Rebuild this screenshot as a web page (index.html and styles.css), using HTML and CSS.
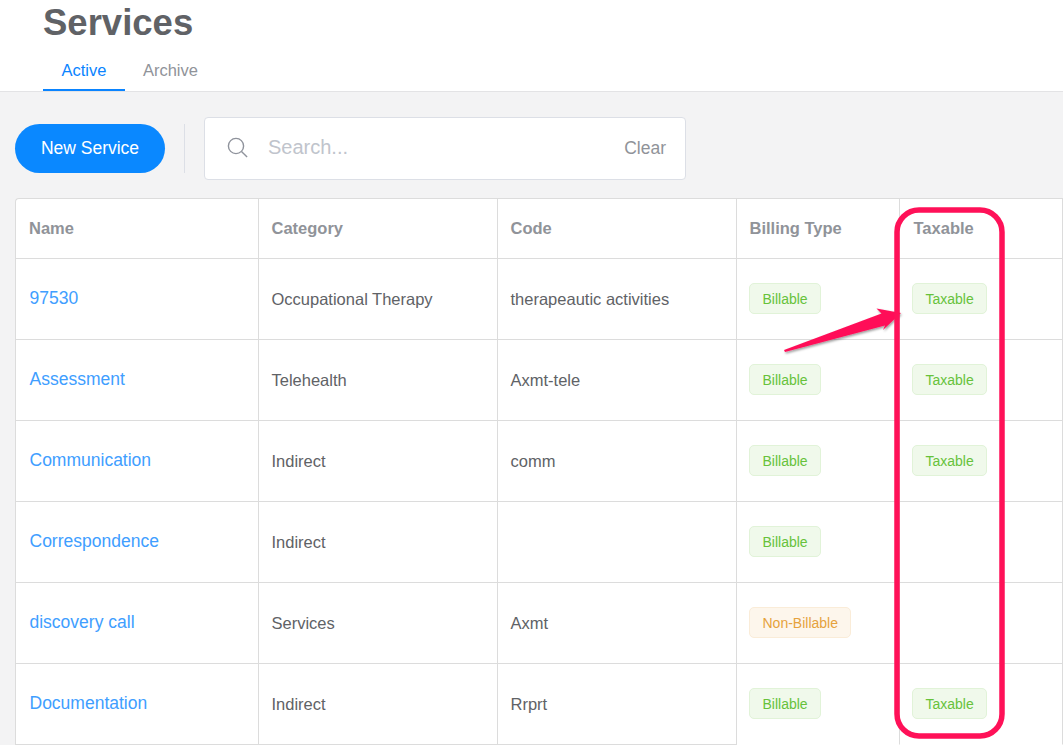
FILE: index.html
```html
<!DOCTYPE html>
<html lang="en">
<head>
<meta charset="utf-8">
<title>Services</title>
<link rel="stylesheet" href="styles.css">
</head>
<body>
<header class="page-header">
  <h1 class="title">Services</h1>
  <nav class="tabs">
    <a class="tab tab-active">Active</a>
    <a class="tab">Archive</a>
  </nav>
</header>
<main class="content">
  <div class="toolbar">
    <button class="new-btn">New Service</button>
    <span class="divider"></span>
    <div class="search">
      <svg class="search-icon" width="22" height="22" viewBox="0 0 22 22" fill="none" stroke="#8f939c" stroke-width="1.4"><circle cx="9" cy="9" r="7.6"/><path d="M14.500 14.500l5.600 5.600"/></svg>
      <span class="placeholder">Search...</span>
      <span class="clear">Clear</span>
    </div>
  </div>
  <table class="grid">
    <colgroup><col class="c1"><col class="c2"><col class="c2"><col class="c3"><col class="c3"></colgroup>
    <thead>
      <tr><th>Name</th><th>Category</th><th>Code</th><th>Billing Type</th><th>Taxable</th></tr>
    </thead>
    <tbody>
      <tr><td><a class="link">97530</a></td><td>Occupational Therapy</td><td>therapeautic activities</td><td><span class="tag tag-green">Billable</span></td><td><span class="tag tag-green">Taxable</span></td></tr>
      <tr><td><a class="link">Assessment</a></td><td>Telehealth</td><td>Axmt-tele</td><td><span class="tag tag-green">Billable</span></td><td><span class="tag tag-green">Taxable</span></td></tr>
      <tr><td><a class="link">Communication</a></td><td>Indirect</td><td>comm</td><td><span class="tag tag-green">Billable</span></td><td><span class="tag tag-green">Taxable</span></td></tr>
      <tr><td><a class="link">Correspondence</a></td><td>Indirect</td><td></td><td><span class="tag tag-green">Billable</span></td><td></td></tr>
      <tr><td><a class="link">discovery call</a></td><td>Services</td><td>Axmt</td><td><span class="tag tag-orange">Non-Billable</span></td><td></td></tr>
      <tr class="last-row"><td><a class="link">Documentation</a></td><td>Indirect</td><td>Rrprt</td><td><span class="tag tag-green">Billable</span></td><td><span class="tag tag-green">Taxable</span></td></tr>
    </tbody>
  </table>
</main>
<svg class="annotation" width="1063" height="745" viewBox="0 0 1063 745">
  <defs>
    <filter id="arrow-shadow" x="-10%" y="-20%" width="120%" height="150%"><feDropShadow dx="1" dy="1.500" stdDeviation="1" flood-color="#000" flood-opacity=".4"/></filter>
  </defs>
  <path d="M784 350L881.500 313.500L876.500 308.500L901 313L883 330L885 325.500L785 352Z" fill="#ff1158" filter="url(#arrow-shadow)"/>
  <rect x="897" y="210" width="105" height="526" rx="22" fill="none" stroke="#ff1158" stroke-width="5.500"/>
</svg>
</body>
</html>
```
FILE: styles.css
```css
* { box-sizing: border-box; }
html, body { margin: 0; padding: 0; }
body {
  width: 1063px;
  height: 745px;
  overflow: hidden;
  background: #f3f3f4;
  font-family: "Liberation Sans", Arial, sans-serif;
  color: #606266;
}
.page-header {
  height: 92px;
  padding: 0 0 0 43px;
  background: #fff;
  border-bottom: 1px solid #e3e3e5;
}
.title {
  margin: 0;
  height: 50px;
  font-size: 36.500px;
  line-height: 46px;
  font-weight: 700;
  color: #606266;
}
.tabs { display: flex; height: 41px; }
.tab {
  display: block;
  font-size: 16.500px;
  line-height: 40px;
  color: #909399;
  padding: 0 18px;
  height: 41px;
}
.tab-active {
  color: #0a84ff;
  border-bottom: 2px solid #0a84ff;
  padding: 0 18.500px;
}
.content { padding: 25px 0 0 15px; }
.toolbar { display: flex; align-items: center; height: 63px; }
.new-btn {
  width: 150px;
  height: 49px;
  border: 0;
  border-radius: 25px;
  background: #0a88ff;
  color: #fff;
  font: 17.500px "Liberation Sans", Arial, sans-serif;
}
.divider { width: 1px; height: 49px; background: #dcdfe6; margin: 0 19px; }
.search {
  display: flex;
  align-items: center;
  width: 482px;
  height: 63px;
  padding: 0 19px 2px 22px;
  background: #fff;
  border: 1px solid #dcdfe6;
  border-radius: 4px;
}
.search-icon { flex: none; }
.placeholder { flex: 1; margin-left: 19px; font-size: 20px; color: #c0c4cc; }
.clear { font-size: 17.500px; color: #909399; position: relative; top: 1px; }
.grid {
  margin-top: 18px;
  width: 1048px;
  table-layout: fixed;
  border-collapse: separate;
  border-spacing: 0;
  background: #fff;
  border-top: 1px solid #dcdcdc;
  border-left: 1px solid #dcdcdc;
  border-radius: 4px 0 0 0;
}
.c1 { width: 243px; }
.c2 { width: 239px; }
.c3 { width: 163px; }
th, td {
  padding: 0 0 0 12.500px;
  border-right: 1px solid #dcdcdc;
  border-bottom: 1px solid #dcdcdc;
  text-align: left;
  white-space: nowrap;
}
th {
  height: 60px;
  font-size: 16.500px;
  font-weight: 700;
  color: #909399;
}
th:last-child { padding-left: 13.500px; }
td { height: 81px; font-size: 16.500px; color: #606266; }
th:first-child { padding-left: 13px; }
td:first-child { padding-left: 13.500px; }
.last-row td:nth-child(n+4) { border-bottom-color: transparent; }
.link { color: #409eff; font-size: 17.500px; position: relative; top: -1px; }
.tag {
  display: inline-block;
  height: 31px;
  line-height: 30px;
  padding: 0 12.500px;
  margin-left: -0.500px;
  font-size: 14px;
  border: 1px solid;
  border-radius: 5px;
  vertical-align: middle;
  position: relative;
  top: -1px;
}
.tag-green { color: #67c23a; background: #f0f9eb; border-color: #e1f3d8; }
.tag-orange { color: #e6a23c; background: #fdf6ec; border-color: #faecd8; }
.annotation { position: absolute; left: 0; top: 0; pointer-events: none; }
```
